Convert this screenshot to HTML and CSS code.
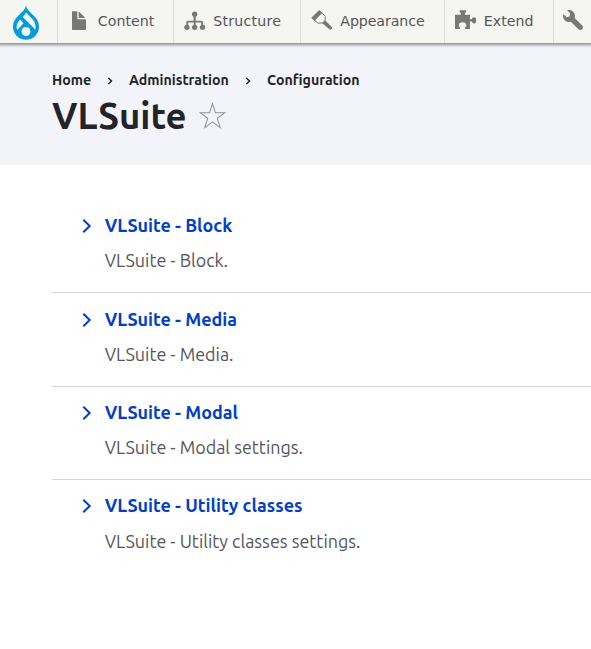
FILE: index.html
```html
<!DOCTYPE html>
<html lang="en">
<head>
<meta charset="utf-8">
<title>VLSuite</title>
<link rel="stylesheet" href="styles.css">
</head>
<body>
<nav class="toolbar">
  <a class="tab logo"><svg width="28" height="35" viewBox="0 0 28 35"><path fill="#009cde" d="M14 .8c1.200 4.500 4.600 6.800 7.600 9.800 3.200 3.300 5.400 6.500 5.400 11.200A13 13 0 0 1 1 21.800c0-4.700 2.200-7.900 5.400-11.200 3-3 6.400-5.300 7.600-9.800z"/><path fill="#f5f5f2" d="M14 7.500c2.300 2.700 5.600 5 7.800 8.200 1.900 2.800 2.300 6.200 1.300 9.300-.7-1.300-1.500-2.200-2.500-3.200L10.700 11.900c1.300-1.300 2.500-2.600 3.300-4.400z"/><path fill="#f5f5f2" d="m8 14.600 3.500 3.600-6.200 6.700c-1.700-3.800 0-7.200 2.700-10.300z"/><circle cx="14" cy="26.500" r="4.500" fill="#f5f5f2"/></svg></a>
  <a class="tab content"><svg class="icon" viewBox="0 0 16 16"><path d="M12.500 7h-5a.5.500 0 0 1-.5-.5v-5a.5.500 0 0 0-.5-.5h-3a.5.500 0 0 0-.5.500v13a.5.500 0 0 0 .5.500h9.500a.5.500 0 0 0 .5-.5v-7a.5.500 0 0 0-.5-.5z"/><path d="M8.500 6h4c.275 0 .34-.16.146-.354L8.354 1.354C8.160 1.160 8 1.225 8 1.500v4a.5.500 0 0 0 .5.500z"/></svg><span>Content</span></a>
  <a class="tab structure"><svg class="icon" viewBox="0 0 16 16"><path d="M7.200 4h1.600v4H13a1.300 1.300 0 0 1 1.300 1.300V12h-1.400V9.400H8.700V12H7.300V9.400H3.100V12H1.700V9.300A1.300 1.300 0 0 1 3 8h4.200z"/><circle cx="8" cy="3.200" r="2"/><circle cx="2.200" cy="13" r="2"/><circle cx="8" cy="13" r="2"/><circle cx="13.900" cy="13" r="2"/></svg><span>Structure</span></a>
  <a class="tab appearance"><svg class="icon" viewBox="0 0 16 16"><path d="M.2 5.800 6.200 0l2.300 2.300-6 5.900z"/><path d="m2.300 7.600 3 2.300 3.500-.2 1.700-1.700.2-3.200-2.800-3" fill="none" stroke="#787878" stroke-width=".75"/><path d="m8.300 9.800 2.200-2.200 4.900 5c.6.600.5 1.300.1 1.700-.5.500-1.200.6-1.700.1z"/></svg><span>Appearance</span></a>
  <a class="tab extend"><svg class="icon" viewBox="0 0 16 16"><path d="M0 3.500h4.400V2.300l-.9-.7V.2h4.800v1.400l-.9.700v1.200h3.800V7h1.400c.2-1 .8-1.500 1.700-1.500 1.200 0 1.900 1 1.900 2.300s-.7 2.300-1.900 2.300c-.9 0-1.500-.6-1.700-1.400h-1.400v5.600H7.500v-1.100c.8-.5 1.100-1.200 1-2-.1-1.200-1.300-2.100-2.800-2.100-1.600 0-2.700.8-2.900 2-.1 1 .3 1.600.9 2v1.200H0z"/></svg><span>Extend</span></a>
  <a class="tab config"><svg class="icon" viewBox="0 0 16 16"><path d="M14.416 11.586 8.750 5.921c.15-.449.252-.921.252-1.421C9.002 2.015 6.986 0 4.500 0c-.505 0-.981.102-1.434.255l2.431 2.431-.588 2.196-2.196.588L.268 3.025C.106 3.489 0 3.981 0 4.500 0 6.986 2.014 9 4.500 9c.5 0 .972-.102 1.421-.251l5.667 5.665c.781.781 2.047.781 2.828 0s.781-2.047 0-2.828z"/></svg></a>
</nav>
<header class="header">
  <ol class="breadcrumb">
    <li><span class="crumb home">Home</span></li>
    <li><svg class="sep" viewBox="0 0 6 8"><path d="m1.300 1 3.200 3-3.200 3"/></svg><span class="crumb admin">Administration</span></li>
    <li><svg class="sep" viewBox="0 0 6 8"><path d="m1.300 1 3.200 3-3.200 3"/></svg><span class="crumb conf">Configuration</span></li>
  </ol>
  <div class="heading"><h1>VLSuite</h1><svg class="star" viewBox="0 0 26 26"><path d="m13 1.500 2.800 8.800H25l-7.400 5.400 2.900 8.900-7.500-5.500-7.500 5.500 2.900-8.900L1 10.300h9.200z"/></svg></div>
</header>
<main>
  <dl class="list">
    <div class="item"><dt><svg class="chev" viewBox="0 0 10 16"><path d="m1.300 1.800 6.400 6.200-6.400 6.200"/></svg><a>VLSuite - Block</a></dt><dd>VLSuite - Block.</dd></div>
    <div class="item"><dt><svg class="chev" viewBox="0 0 10 16"><path d="m1.300 1.800 6.400 6.200-6.400 6.200"/></svg><a>VLSuite - Media</a></dt><dd>VLSuite - Media.</dd></div>
    <div class="item"><dt><svg class="chev" viewBox="0 0 10 16"><path d="m1.300 1.800 6.400 6.200-6.400 6.200"/></svg><a>VLSuite - Modal</a></dt><dd>VLSuite - Modal settings.</dd></div>
    <div class="item"><dt><svg class="chev" viewBox="0 0 10 16"><path d="m1.300 1.800 6.400 6.200-6.400 6.200"/></svg><a>VLSuite - Utility classes</a></dt><dd>VLSuite - Utility classes settings.</dd></div>
  </dl>
</main>
</body>
</html>
```
FILE: styles.css
```css
* { box-sizing: border-box; }
body { margin: 0; background: #fff; font-family: Ubuntu, "Noto Sans", sans-serif; color: #232429; overflow: hidden; }
.toolbar { display: flex; height: 43px; background: #f5f5f2; box-shadow: 0 0 3px 2px #8b8f8b; position: relative; font: 14.2px/42px "DejaVu Sans", sans-serif; color: #565656; }
.tab { display: flex; flex: none; border-right: 1px solid #ddd; padding-left: 10px; }
.tab span { margin-left: 8px; }
.structure span { letter-spacing: .2px; }
.content span { margin-left: 8.500px; }
.appearance span { letter-spacing: -.1px; }
.extend span { margin-left: 7.500px; }
.icon { width: 21.33px; height: 21.33px; margin-top: 10px; flex: none; fill: #787878; }
.logo { width: 58px; padding: 5px 0 0 12px; }
.content { width: 116px; }
.structure { width: 127px; }
.appearance { width: 144px; }
.extend { width: 109px; }
.config { width: 60px; padding-left: 9px; }
.header { height: 122px; background: #f3f4f9; padding: 27px 0 0 52px; }
.breadcrumb { display: flex; list-style: none; margin: 0; padding: 0; font-size: 14.2px; line-height: 20px; font-weight: 700; }
.breadcrumb li { display: flex; align-items: center; }
.crumb { white-space: nowrap; }
.home { width: 39px; }
.admin { width: 100px; }
.sep { width: 6px; height: 8px; margin: 1px 16px 0; fill: none; stroke: #232429; stroke-width: 1.5; }
.heading { display: flex; }
h1 { width: 147px; margin: 0; font-size: 36.5px; line-height: 51px; }
.star { width: 27px; height: 27px; margin-top: 12px; fill: none; stroke: #919297; stroke-width: 1; }
.list { margin: 34.95px 0 0 52px; }
.item { height: 93.37px; padding: 13.25px 0 0 30px; border-bottom: 1px solid #d3d4d9; }
.item:last-child { border: 0; }
dt { display: flex; align-items: center; height: 24px; font-size: 17.95px; line-height: 24px; font-weight: 700; color: #003ecc; }
.chev { width: 10px; height: 16px; margin: 2px 12.700px 0 0; fill: none; stroke: #003ecc; stroke-width: 2; }
dt a { white-space: nowrap; }
dd { margin: 11.27px 0 0 22.700px; height: 24px; line-height: 24px; font-size: 17.92px; color: #55565b; white-space: nowrap; }
```
